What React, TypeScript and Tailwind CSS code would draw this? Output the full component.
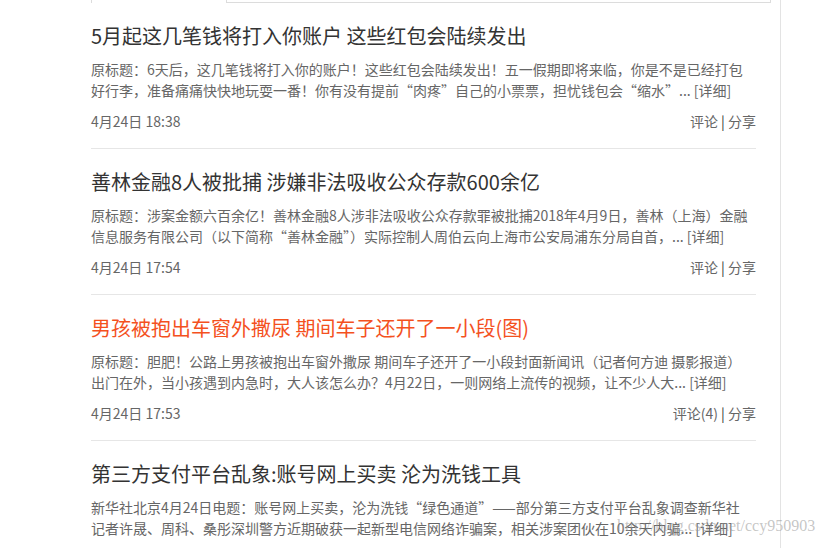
import React from 'react';

// News feed items
const news = [
  {
    id: 1,
    title: '5月起这几笔钱将打入你账户 这些红包会陆续发出',
    summary:
      '原标题：6天后，这几笔钱将打入你的账户！这些红包会陆续发出！五一假期即将来临，你是不是已经打包好行李，准备痛痛快快地玩耍一番！你有没有提前“肉疼”自己的小票票，担忧钱包会“缩水”...',
    time: '4月24日 18:38',
    comments: '评论',
    hot: false,
  },
  {
    id: 2,
    title: '善林金融8人被批捕 涉嫌非法吸收公众存款600余亿',
    summary:
      '原标题：涉案金额六百余亿！善林金融8人涉非法吸收公众存款罪被批捕2018年4月9日，善林（上海）金融信息服务有限公司（以下简称“善林金融”）实际控制人周伯云向上海市公安局浦东分局自首，...',
    time: '4月24日 17:54',
    comments: '评论',
    hot: false,
  },
  {
    id: 3,
    title: '男孩被抱出车窗外撒尿 期间车子还开了一小段(图)',
    summary:
      '原标题：胆肥！公路上男孩被抱出车窗外撒尿 期间车子还开了一小段封面新闻讯（记者何方迪 摄影报道）出门在外，当小孩遇到内急时，大人该怎么办？4月22日，一则网络上流传的视频，让不少人大...',
    time: '4月24日 17:53',
    comments: '评论(4)',
    hot: true,
  },
  {
    id: 4,
    title: '第三方支付平台乱象:账号网上买卖 沦为洗钱工具',
    summary:
      '新华社北京4月24日电题：账号网上买卖，沦为洗钱“绿色通道”——部分第三方支付平台乱象调查新华社记者许晟、周科、桑彤深圳警方近期破获一起新型电信网络诈骗案，相关涉案团伙在10余天内骗...',
    time: '4月24日 17:50',
    comments: '评论',
    hot: false,
  },
];

export default function App() {
  return (
    <div
      className="relative min-h-screen bg-white text-[#333]"
      style={{ fontFamily: '"Noto Sans CJK SC", "Noto Sans", sans-serif' }}
    >
      <div className="w-[781px] min-h-screen border-r border-[#e3e3e3] pl-[91px]">
        {/* Tabs (scrolled past, only the bottom edge shows) */}
        <div className="flex h-[3px] w-[680px]">
          <div className="w-[136px] border-x border-[#dcdcdc]" />
          <div className="flex-1 border-b border-r border-[#dcdcdc]" />
        </div>

        {/* News list */}
        <ul className="w-[665px]">
          {news.map((item) => (
            <li key={item.id} className="h-[146px] border-b border-[#e6e6e6] pt-[18px]">
              <h3
                className={`text-[20px] leading-[30px] ${
                  item.hot ? 'text-[#f4511e]' : 'text-[#333]'
                }`}
              >
                {item.title}
              </h3>
              <p className="mt-[8px] pr-[8px] text-[14px] leading-[21px] text-[#666]">
                {item.summary} <a className="text-[#666]">[详细]</a>
              </p>
              <div className="mt-[10px] flex items-center justify-between text-[14px] leading-[21px] text-[#666]">
                <span>{item.time}</span>
                <span>
                  {item.comments} <span className="text-[#333]">|</span> 分享
                </span>
              </div>
            </li>
          ))}
        </ul>
      </div>

      {/* Blog watermark */}
      <div
        className="pointer-events-none absolute left-[617px] top-[516px] text-[16px] leading-[20px] text-[rgba(150,150,150,0.55)]"
        style={{ fontFamily: '"Liberation Serif", serif' }}
      >
        http://blog.csdn.net/ccy950903
      </div>
    </div>
  );
}
